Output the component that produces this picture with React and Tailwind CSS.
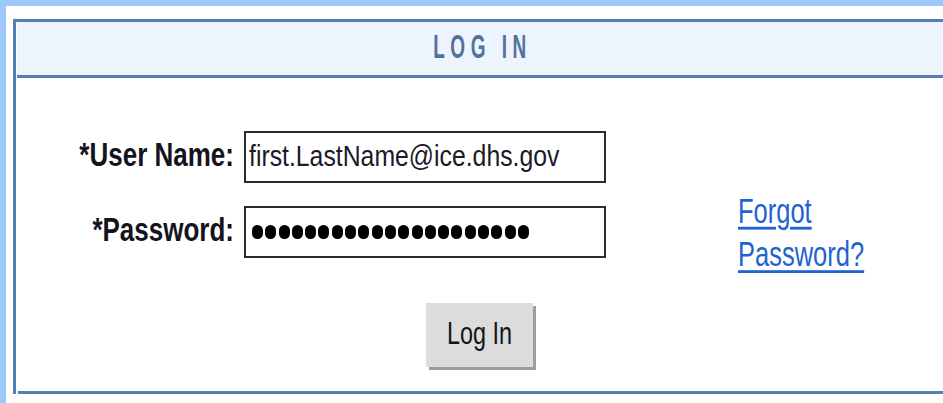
const sans = { fontFamily: '"Liberation Sans", Arial, sans-serif' };

const Field = ({ label, children }) => (
    <>
        <div className="flex h-[52px] items-center justify-end pb-[4px]">
            <span className="inline-block scale-y-[1.25] text-[26px] font-bold text-[#141420]">{label}</span>
        </div>
        <div className="flex h-[52px] w-[362px] items-center border-2 border-[#2b2b2b] bg-white pb-[3px] pl-[3px]">
            {children}
        </div>
    </>
);

const PasswordDots = ({ count }) => (
    <div className="flex gap-[2.3px] pl-[3px] pt-[3px]">
        {Array.from({ length: count }).map((_, i) => (
            <span key={i} className="h-[14px] w-[11px] rounded-full bg-black" />
        ))}
    </div>
);

export default function App() {
    return (
        <div className="min-h-screen bg-[#9dc8fb] pl-[6px] pt-[6px]" style={sans}>
            <div className="h-[397px] bg-white pl-[7px] pt-[13px]">
                <div className="border-l-[3px] border-t-[3px] border-[#5580b4]">
                    {/* panel header */}
                    <div className="ml-px flex h-[56px] items-center justify-center border-b-[3px] border-[#5580b4] bg-[#edf4fe] pl-[5px]">
                        <span className="inline-block scale-y-[1.7] text-[19px] font-bold tracking-[5.5px] text-[#52729b]">LOG IN</span>
                    </div>

                    {/* login form */}
                    <form className="pt-[53px]" onSubmit={(e) => e.preventDefault()}>
                        <div className="grid grid-cols-[218px_362px_1fr] gap-x-[10px] gap-y-[23px]">
                            <Field label="*User Name:">
                                <span className="inline-block scale-y-[1.2] text-[24.8px] text-[#1a1a28]">first.LastName@ice.dhs.gov</span>
                            </Field>
                            <div className="row-span-2 pl-[122px] pt-[58px]">
                                <a href="#" className="block origin-top scale-y-[1.4] text-[25.5px] leading-[31px] text-[#1f63d1] underline underline-offset-[3px]">
                                    Forgot
                                    <br />
                                    Password?
                                </a>
                            </div>
                            <Field label="*Password:">
                                <PasswordDots count={21} />
                            </Field>
                        </div>

                        <div className="mt-[45px] flex justify-center">
                            <button type="submit" className="h-[64px] w-[107px] cursor-pointer bg-[#dcdcdc] pb-[2px] text-[23.4px] text-[#141420] shadow-[3px_3px_0_#9c9c9c]">
                                <span className="inline-block scale-y-[1.35]">Log In</span>
                            </button>
                        </div>

                        <div className="ml-[2px] mt-[24px] h-[3px] bg-[#5580b4]" />
                    </form>
                </div>
            </div>
        </div>
    );
}
